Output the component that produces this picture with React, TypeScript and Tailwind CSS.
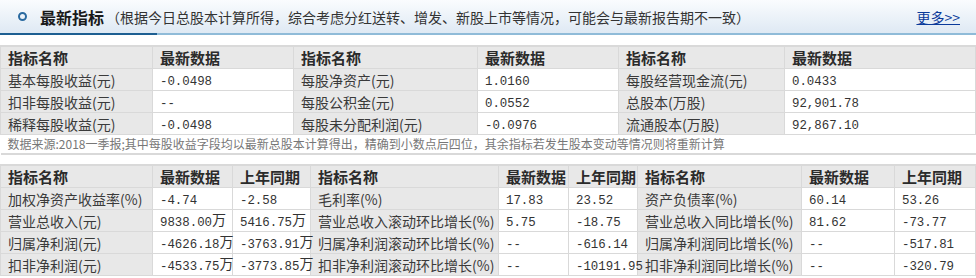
import type { ReactNode } from 'react'

const CJK = "font-['Noto_Sans_CJK_SC','Noto_Sans',sans-serif]"

// top table: three [label, value] pairs per row
const basic: [string, string][][] = [
  [
    ['基本每股收益(元)', '-0.0498'],
    ['每股净资产(元)', '1.0160'],
    ['每股经营现金流(元)', '0.0433'],
  ],
  [
    ['扣非每股收益(元)', '--'],
    ['每股公积金(元)', '0.0552'],
    ['总股本(万股)', '92,901.78'],
  ],
  [
    ['稀释每股收益(元)', '-0.0498'],
    ['每股未分配利润(元)', '-0.0976'],
    ['流通股本(万股)', '92,867.10'],
  ],
]

// bottom table: [label, latest, last year]
const growth: [string, string, string][][] = [
  [
    ['加权净资产收益率(%)', '-4.74', '-2.58'],
    ['毛利率(%)', '17.83', '23.52'],
    ['资产负债率(%)', '60.14', '53.26'],
  ],
  [
    ['营业总收入(元)', '9838.00万', '5416.75万'],
    ['营业总收入滚动环比增长(%)', '5.75', '-18.75'],
    ['营业总收入同比增长(%)', '81.62', '-73.77'],
  ],
  [
    ['归属净利润(元)', '-4626.18万', '-3763.91万'],
    ['归属净利润滚动环比增长(%)', '--', '-616.14'],
    ['归属净利润同比增长(%)', '--', '-517.81'],
  ],
  [
    ['扣非净利润(元)', '-4533.75万', '-3773.85万'],
    ['扣非净利润滚动环比增长(%)', '--', '-10191.95'],
    ['扣非净利润同比增长(%)', '--', '-320.79'],
  ],
]

// numbers are drawn half-width like the original bitmap font; 万 stays CJK
function Num({ v }: { v: string }) {
  const unit = v.endsWith('万')
  const n = unit ? v.slice(0, -1) : v
  return (
    <span className="text-[14px] leading-[18px]">
      <span className="relative top-[1px] font-['Liberation_Mono',monospace] text-[12.4px]">{n}</span>
      {unit && '万'}
    </span>
  )
}

function Box({ children, className = '' }: { children: ReactNode; className?: string }) {
  return (
    <div className={`flex h-[21px] items-center whitespace-nowrap pl-[7px] leading-none ${className}`}>
      {children}
    </div>
  )
}

function Th({ children }: { children: ReactNode }) {
  return (
    <th className="border border-[#d9d9d9] bg-[#e8e8e8] p-0 text-left">
      <Box className="text-[15px] font-bold text-[#2b2b2b]">{children}</Box>
    </th>
  )
}

function Label({ children }: { children: ReactNode }) {
  return (
    <td className="border border-[#d9d9d9] bg-[#e8e8e8] p-0 overflow-hidden">
      <Box className="text-[14px] text-[#3a3a3a]">{children}</Box>
    </td>
  )
}

function Cell({ v }: { v: string }) {
  return (
    <td className="border border-[#d9d9d9] bg-white p-0">
      <Box className="text-[#333]">
        <Num v={v} />
      </Box>
    </td>
  )
}

function Header() {
  return (
    <div className="h-[35px] bg-gradient-to-b from-[#fafcfe] to-[#dde8f3]">
      <div className="flex h-[33px] items-center pl-[18px] pr-[10px]">
        <span className="mr-[13px] block h-[9px] w-[9px] rounded-full border-2 border-[#2a6aa0]" />
        <span className="text-[16px] font-bold text-[#1a1a1a] leading-none">最新指标</span>
        <span className="ml-[2px] text-[14px] text-[#333] leading-none">
          （根据今日总股本计算所得，综合考虑分红送转、增发、新股上市等情况，可能会与最新报告期不一致）
        </span>
        <a className="ml-auto mr-[6px] text-[14px] text-[#0a3a9a] underline leading-none" href="#">
          更多&gt;&gt;
        </a>
      </div>
      <div className="flex h-[2px]">
        <div className="w-[157px] bg-[#1d5f92]" />
        <div className="flex-1 bg-[#8fbbd8]" />
      </div>
    </div>
  )
}

export default function App() {
  return (
    <div className={`h-[278px] w-[976px] overflow-hidden bg-white ${CJK}`}>
      <Header />

      <table className="mt-[10px] w-full table-fixed border-collapse border-t-2 border-[#d9d9d9]">
        <colgroup>
          <col className="w-[152px]" />
          <col className="w-[141px]" />
          <col className="w-[184px]" />
          <col className="w-[141px]" />
          <col className="w-[166px]" />
          <col />
        </colgroup>
        <thead>
          <tr>
            <Th>指标名称</Th>
            <Th>最新数据</Th>
            <Th>指标名称</Th>
            <Th>最新数据</Th>
            <Th>指标名称</Th>
            <Th>最新数据</Th>
          </tr>
        </thead>
        <tbody>
          {basic.map((row, i) => (
            <tr key={i}>
              {row.map(([label, v]) => [<Label key={label}>{label}</Label>, <Cell key={label + 'v'} v={v} />])}
            </tr>
          ))}
          <tr>
            <td colSpan={6} className="border-b-2 border-[#d9d9d9] p-0">
              <div className="flex h-[18px] items-center whitespace-nowrap pl-[7px] text-[12px] leading-none text-[#777]">
                数据来源:2018一季报;其中每股收益字段均以最新总股本计算得出，精确到小数点后四位，其余指标若发生股本变动等情况则将重新计算
              </div>
            </td>
          </tr>
        </tbody>
      </table>

      <table className="mt-[9px] w-full table-fixed border-collapse border-t-2 border-[#d9d9d9]">
        <colgroup>
          <col className="w-[152px]" />
          <col className="w-[80px]" />
          <col className="w-[78px]" />
          <col className="w-[188px]" />
          <col className="w-[70px]" />
          <col className="w-[69px]" />
          <col className="w-[164px]" />
          <col className="w-[93px]" />
          <col />
        </colgroup>
        <thead>
          <tr>
            {[0, 1, 2].map((g) => [
              <Th key={g + 'a'}>指标名称</Th>,
              <Th key={g + 'b'}>最新数据</Th>,
              <Th key={g + 'c'}>上年同期</Th>,
            ])}
          </tr>
        </thead>
        <tbody>
          {growth.map((row, i) => (
            <tr key={i}>
              {row.map(([label, a, b]) => [
                <Label key={label}>{label}</Label>,
                <Cell key={label + 'a'} v={a} />,
                <Cell key={label + 'b'} v={b} />,
              ])}
            </tr>
          ))}
        </tbody>
      </table>
    </div>
  )
}
